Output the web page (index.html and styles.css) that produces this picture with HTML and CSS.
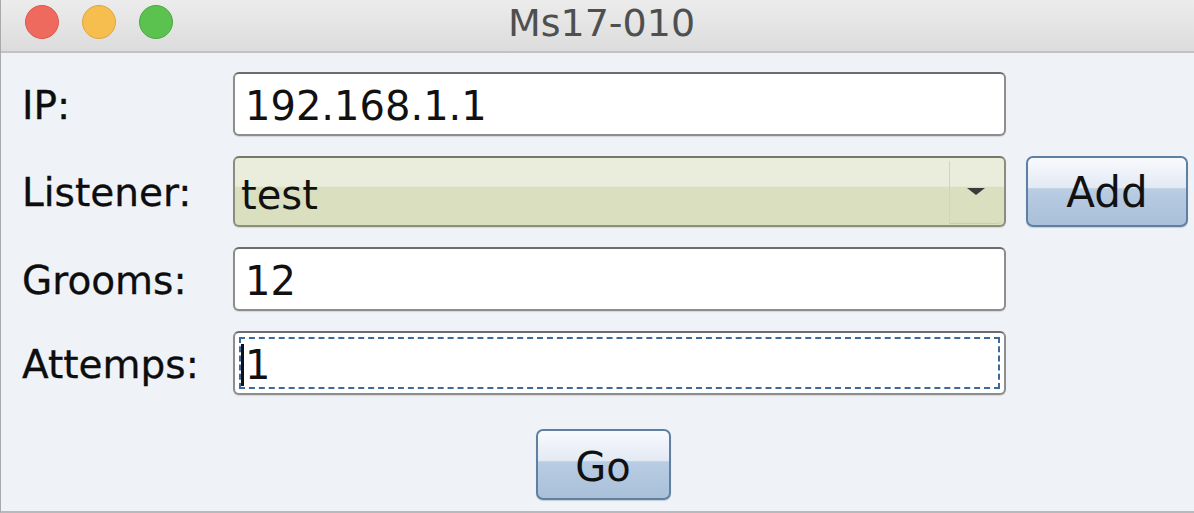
FILE: index.html
```html
<!DOCTYPE html>
<html lang="en">
<head>
    <meta charset="UTF-8">
    <title>Ms17-010</title>
    <link rel="stylesheet" href="styles.css">
</head>
<body>
    <div class="window">
        <div class="titlebar">
            <div class="lights">
                <span class="light red"></span>
                <span class="light yellow"></span>
                <span class="light green"></span>
            </div>
            <div class="title">Ms17-010</div>
        </div>

        <div class="content">
            <div class="form">
                <label class="lbl">IP:</label>
                <div class="field">192.168.1.1</div>
                <div></div>

                <label class="lbl">Listener:</label>
                <div class="combo">
                    <span class="combo-text">test</span>
                    <span class="combo-arrow"><span class="tri"></span></span>
                </div>
                <button class="btn add-btn">Add</button>

                <label class="lbl">Grooms:</label>
                <div class="field">12</div>
                <div></div>

                <label class="lbl">Attemps:</label>
                <div class="field focused"><span class="caret"></span>1</div>
                <div></div>
            </div>

            <div class="actions">
                <button class="btn go-btn">Go</button>
            </div>
        </div>
    </div>
</body>
</html>
```

FILE: styles.css
```css
html, body {
    margin: 0;
    padding: 0;
    height: 100%;
}

body {
    font-family: "DejaVu Sans", Verdana, sans-serif;
    color: #111;
    background-color: #eff2f7;
}

.window {
    height: 513px;
    box-sizing: border-box;
    border-left: 1px solid #a9a9ab;
    border-bottom: 2px solid #b7b9bd;
    display: flex;
    flex-direction: column;
}

.titlebar {
    height: 51px;
    position: relative;
    background: linear-gradient(#ececec, #dcdcdc);
    border-bottom: 2px solid #c2c2c4;
    display: flex;
    align-items: center;
    justify-content: center;
}

.lights {
    position: absolute;
    left: 24px;
    top: 5px;
    display: flex;
    gap: 23px;
}

.light {
    width: 34px;
    height: 34px;
    border-radius: 50%;
    box-sizing: border-box;
}

.red {
    background: #ef6a5e;
    border: 1px solid #e0574c;
}

.yellow {
    background: #f6be4f;
    border: 1px solid #dfa63f;
}

.green {
    background: #5bc24f;
    border: 1px solid #4aa93f;
}

.title {
    font-size: 38px;
    color: #4f4f4f;
    margin-top: -6px;
    margin-left: 8px;
}

.content {
    flex: 1;
    padding: 19px 0 0 21px;
}

.form {
    display: grid;
    grid-template-columns: 191px 773px 162px;
    column-gap: 20px;
    row-gap: 20px;
    align-items: center;
}

.form > :nth-child(3n+3) {
    align-self: stretch;
}

.lbl {
    font-size: 39px;
    color: #0d0d0d;
    margin-top: 2px;
    -webkit-text-stroke: 0.3px #0d0d0d;
}

.field {
    height: 64px;
    box-sizing: border-box;
    background: #fff;
    border: 2px solid #8d8d8d;
    border-top-color: #6d6d6d;
    border-radius: 6px;
    box-shadow: 0 1px 1px #d4d6da;
    font-size: 40px;
    padding: 4px 10px 0;
    display: flex;
    align-items: center;
}

.field.focused {
    outline: 2px dashed #3d6a9a;
    outline-offset: -8px;
    padding-left: 6px;
}

.caret {
    width: 3px;
    height: 42px;
    background: #111;
    margin-right: 1px;
}

.combo {
    height: 71px;
    box-sizing: border-box;
    border: 2px solid #8c8e7c;
    border-top-color: #777866;
    border-radius: 6px;
    background: linear-gradient(#eaeddb 0%, #eaeddb 42%, #d9dfbf 44%, #d9dfbf 100%);
    display: flex;
    align-items: center;
    justify-content: space-between;
    box-shadow: 0 1px 1px #d4d6da;
}

.combo-text {
    font-size: 40px;
    padding: 6px 0 0 6px;
}

.combo-arrow {
    width: 52px;
    height: 63px;
    margin: 2px 3px 0 0;
    box-sizing: border-box;
    border-left: 1px solid #cfd3bf;
    border-radius: 0 4px 4px 0;
    box-shadow: inset 0 -1px 0 #c9cdb8;
    display: flex;
    align-items: center;
    justify-content: center;
}

.tri {
    width: 0;
    height: 0;
    border-left: 9px solid transparent;
    border-right: 9px solid transparent;
    border-top: 7px solid #3a3a3a;
    margin-top: -2px;
}

.btn {
    font-family: "DejaVu Sans", Verdana, sans-serif;
    font-size: 40px;
    color: #111;
    background: linear-gradient(#f8fafd 0%, #e3eaf4 44%, #b9cde3 46%, #a9c0d9 100%);
    border: 2px solid #5f7fa3;
    border-radius: 7px;
    padding: 0;
    box-shadow: 0 1px 1px #c9ced6;
}

.add-btn {
    width: 162px;
    height: 71px;
    padding-top: 2px;
    font-size: 42px;
}

.actions {
    display: flex;
    justify-content: center;
    padding: 34px 0 0 0;
    margin-left: -10px;
}

.go-btn {
    width: 135px;
    height: 71px;
    padding-top: 4px;
}
```
